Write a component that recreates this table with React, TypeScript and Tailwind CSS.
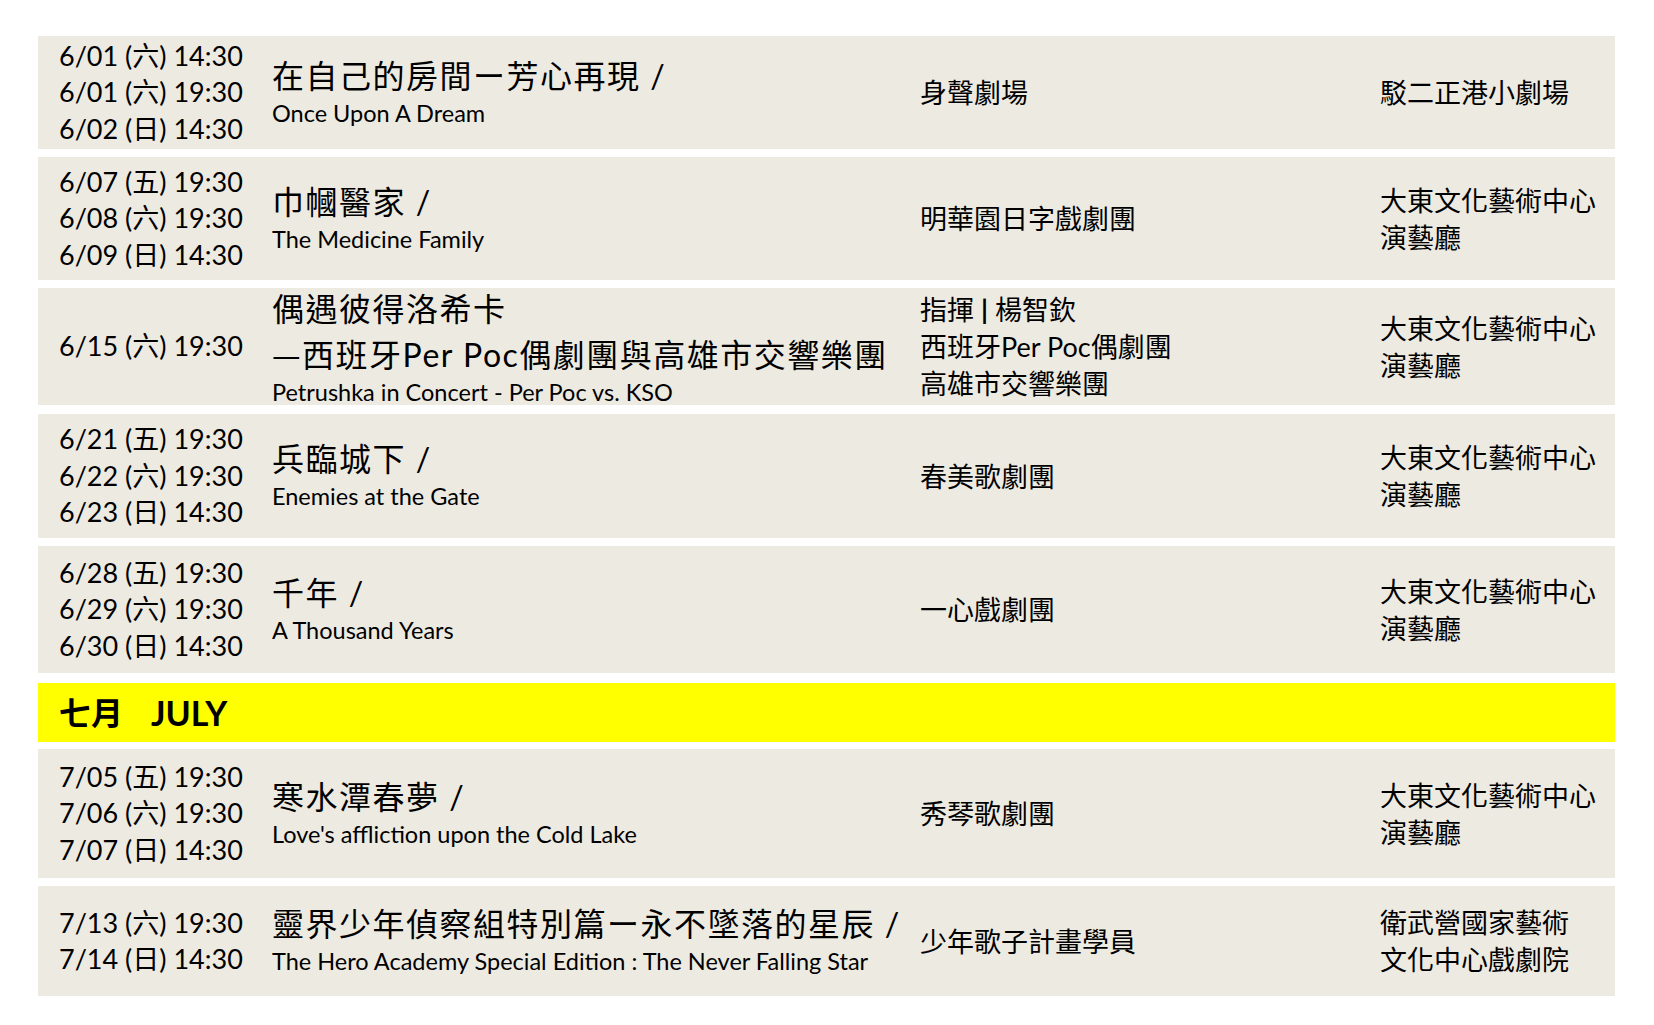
import React from "react";

type Show = {
  dates: string[];
  title: React.ReactNode[];
  en: string;
  by: React.ReactNode[];
  venue: string[];
  h: string;
  mt: string;
  tall?: boolean;
};

const cjk = "font-['Noto_Sans_CJK_TC',sans-serif]";

const june: Show[] = [
  {
    dates: ["6/01 (六) 14:30", "6/01 (六) 19:30", "6/02 (日) 14:30"],
    title: ["在自己的房間ー芳心再現 /"],
    en: "Once Upon A Dream",
    by: ["身聲劇場"],
    venue: ["駁二正港小劇場"],
    h: "h-[113px]",
    mt: "mt-0",
  },
  {
    dates: ["6/07 (五) 19:30", "6/08 (六) 19:30", "6/09 (日) 14:30"],
    title: ["巾幗醫家 /"],
    en: "The Medicine Family",
    by: ["明華園日字戲劇團"],
    venue: ["大東文化藝術中心", "演藝廳"],
    h: "h-[123px]",
    mt: "mt-[8px]",
  },
  {
    dates: ["6/15 (六) 19:30"],
    title: [
      "偶遇彼得洛希卡",
      <>
        <span className={cjk}>—</span>西班牙Per Poc偶劇團與高雄市交響樂團
      </>,
    ],
    en: "Petrushka in Concert - Per Poc vs. KSO",
    by: [
      <>
        指揮 <span className="font-bold">|</span> 楊智欽
      </>,
      "西班牙Per Poc偶劇團",
      "高雄市交響樂團",
    ],
    venue: ["大東文化藝術中心", "演藝廳"],
    h: "h-[117px]",
    mt: "mt-[8px]",
    tall: true,
  },
  {
    dates: ["6/21 (五) 19:30", "6/22 (六) 19:30", "6/23 (日) 14:30"],
    title: ["兵臨城下 /"],
    en: "Enemies at the Gate",
    by: ["春美歌劇團"],
    venue: ["大東文化藝術中心", "演藝廳"],
    h: "h-[124px]",
    mt: "mt-[9px]",
  },
  {
    dates: ["6/28 (五) 19:30", "6/29 (六) 19:30", "6/30 (日) 14:30"],
    title: ["千年 /"],
    en: "A Thousand Years",
    by: ["一心戲劇團"],
    venue: ["大東文化藝術中心", "演藝廳"],
    h: "h-[127px]",
    mt: "mt-[8px]",
  },
];

const july: Show[] = [
  {
    dates: ["7/05 (五) 19:30", "7/06 (六) 19:30", "7/07 (日) 14:30"],
    title: ["寒水潭春夢 /"],
    en: "Love's affliction upon the Cold Lake",
    by: ["秀琴歌劇團"],
    venue: ["大東文化藝術中心", "演藝廳"],
    h: "h-[129px]",
    mt: "mt-[7px]",
  },
  {
    dates: ["7/13 (六) 19:30", "7/14 (日) 14:30"],
    title: ["靈界少年偵察組特別篇ー永不墜落的星辰 /"],
    en: "The Hero Academy Special Edition : The Never Falling Star",
    by: ["少年歌子計畫學員"],
    venue: ["衛武營國家藝術", "文化中心戲劇院"],
    h: "h-[110px]",
    mt: "mt-[8px]",
  },
];

function Row({ s }: { s: Show }) {
  return (
    <div className={`flex items-center bg-[#edeae2] ${s.h} ${s.mt}`}>
      <div className="w-[234px] shrink-0 pl-[21px] flex flex-col text-[27px] leading-[36.5px] whitespace-nowrap">
        {s.dates.map((d) => (
          <span key={d}>{d}</span>
        ))}
      </div>
      <div className="w-[648px] shrink-0 flex flex-col whitespace-nowrap">
        {s.title.map((t, i) => (
          <span
            key={i}
            className={`text-[32px] tracking-[1.5px] ${s.tall ? "leading-[44px]" : "leading-[40px]"}`}
          >
            {t}
          </span>
        ))}
        <span className={`text-[23.5px] ${s.tall ? "leading-[30px]" : "leading-[34px]"}`}>
          {s.en}
        </span>
      </div>
      <div className="w-[460px] shrink-0 flex flex-col text-[27px] leading-[37px] whitespace-nowrap">
        {s.by.map((b, i) => (
          <span key={i}>{b}</span>
        ))}
      </div>
      <div className="flex-1 flex flex-col text-[27px] leading-[37px] whitespace-nowrap">
        {s.venue.map((v) => (
          <span key={v}>{v}</span>
        ))}
      </div>
    </div>
  );
}

export default function App() {
  return (
    <div className="min-h-screen bg-white text-black font-['Lato','Noto_Sans_CJK_TC',sans-serif]">
      <div className="px-[38px] pt-[36px] pb-[29px] w-[1653px]">
        {june.map((s) => (
          <Row key={s.dates[0]} s={s} />
        ))}

        <div className="mt-[10px] h-[59px] bg-[#ffff00] flex items-center pl-[21px] font-bold">
          <span className="text-[32px]">七月</span>
          <span className="ml-[28px] text-[34px]">JULY</span>
        </div>

        {july.map((s) => (
          <Row key={s.dates[0]} s={s} />
        ))}
      </div>
    </div>
  );
}
